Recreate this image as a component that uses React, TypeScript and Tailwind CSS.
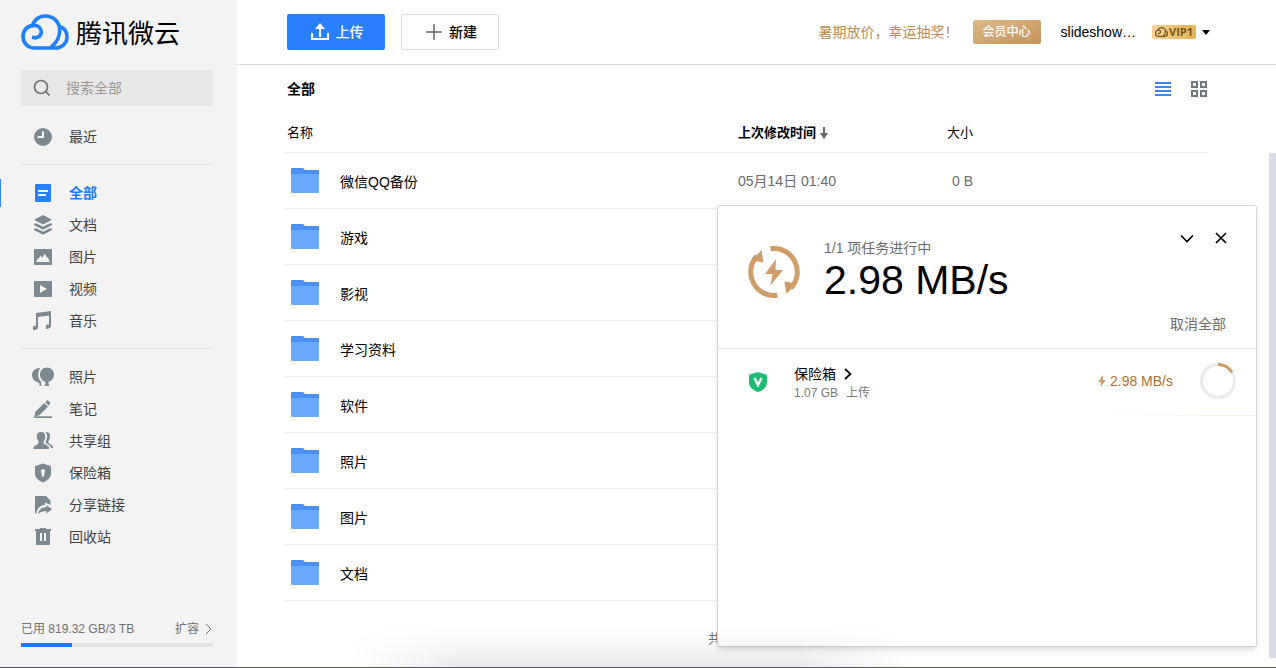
import React from "react";

const FONT = "font-['Liberation_Sans','Noto_Sans_CJK_SC',sans-serif]";

function Cloud({ className, width }: { className: string; width: number }) {
  return (
    <svg viewBox="0 0 48 36" fill="none" stroke="currentColor" strokeWidth={width} strokeLinecap="butt" strokeLinejoin="round" className={className} aria-hidden="true">
      <path d="M11 23.200c4.500 1.800 9.300-.7 9.300-5.300 0-3.900-3.300-6.500-7.300-6.500C6.500 11.400 2 16.300 2 22.500 2 29.200 7 34 13.500 34H34c7 0 12-4.700 12-11 0-5.300-3-9.300-7.500-10.600" />
      <path d="M11.300 12C12.800 6 18 2 24.300 2 32.500 2 38.700 8.300 38.700 16c0 7.500-2.700 12.500-8.700 17.300" />
    </svg>
  );
}

const icons: Record<string, React.ReactNode> = {
  recent: <path fillRule="evenodd" d="M11 2a9 9 0 1 0 0 18 9 9 0 0 0 0-18ZM10 5.500h2V12H5.500v-2H10Z" />,
  all: <path fillRule="evenodd" d="M4 2h14a1 1 0 0 1 1 1v16a1 1 0 0 1-1 1H4a1 1 0 0 1-1-1V3a1 1 0 0 1 1-1Zm2 6v2h10V8Zm0 4v2h8v-2Z" />,
  docs: (
    <>
      <path d="m11 1 9 4.700-9 4.800-9-4.800Z" />
      <path d="m2 9.700 2.200-.4L11 12.800l6.800-3.500 2.200.4v1.300l-9 4.700-9-4.700Zm0 5 2.200-.4L11 17.800l6.800-3.500 2.200.4v1.300l-9 4.700-9-4.700Z" />
    </>
  ),
  images: <path fillRule="evenodd" d="M3 3h16a1 1 0 0 1 1 1v14a1 1 0 0 1-1 1H3a1 1 0 0 1-1-1V4a1 1 0 0 1 1-1Zm1 13h14l-2-4-1.500-1L13 7.500 10 12 8.500 9.500 6.500 12.500 5.500 13Z" />,
  videos: <path fillRule="evenodd" d="M3 3h16a1 1 0 0 1 1 1v14a1 1 0 0 1-1 1H3a1 1 0 0 1-1-1V4a1 1 0 0 1 1-1Zm5 4v8l7-4Z" />,
  music: <path d="M4 3 19 1v14.500c0 2-1.500 3.500-5 3.500v-4c1-.5 2-.7 3-.5V5.500L6 7v10c0 2-1.500 3.200-5 3.200V16.500c1-.6 2-.8 3-.6Z" />,
  photos: (
    <>
      <path d="M8 2C3.500 2 0 5 0 9c0 3.500 2.500 6.500 6.500 7.500l1 1V20H9.200v-4C6.500 13.500 5.500 9 6.500 6 7 4.500 7.600 3 8.500 2Z" />
      <path d="M15 1.500c-4 0-7 3-7 7 0 3.500 2.500 6.700 5.500 7.500v1.200l-.8 2.800h4.600l-.8-2.800V16c3-1 5.500-4 5.500-7.500 0-4-3-7-7-7Z" />
    </>
  ),
  notes: (
    <>
      <path d="M2 18.300h18V20H2Z" />
      <path d="m2.500 18.500.8-4.700 9-8.700 3.700 3.600-8.700 8.600Z" />
      <path d="m13.300 4.200 1.500-1.500c.5-.5 1-.5 1.500 0l1.700 1.700c.5.5.5 1 0 1.500l-1.300 1.500Z" />
    </>
  ),
  group: (
    <>
      <path d="M9 2c3 0 4.300 1.800 4.300 4.500 0 2.300-.8 4-1.800 5 0 1.800.3 2.200 2 3l2.500 1.500c1 .6 1 1.500 1 3H1.500c0-1.500 0-2.400 1-3L5 14.500c1.500-.8 1.700-1.200 1.700-3-1-1-2-2.700-2-5C4.700 3.800 6.300 2 9 2Z" />
      <path d="M13.500 2C17 2 18.500 4 18 7c-.2 2-1 3.500-1.700 4.500 0 1 .3 1.500 1 2l2.500 1.700c1 .8 1.200 1.500 1.200 2.800h-2c-.2-1.200-.5-2-1.700-2.700l-2.500-1.500c-1-.7-1.300-1.300-1-3C15.500 8.500 16 5 13.500 2Z" />
    </>
  ),
  safe: <path fillRule="evenodd" d="m11 1.500 7 2.300c.7.200 1 .6 1 1.200v6.500c0 4-3 7-8 9-5-2-8-5-8-9V5c0-.6.300-1 1-1.200ZM11 7a2.200 2.200 0 0 0-1.200 4v3.500h2.400V11A2.200 2.200 0 0 0 11 7Z" />,
  share: (
    <>
      <path d="M3 2h11l4.500 4.500V11L13 8.500v2.300C8 11.500 4.500 14.500 4.500 19.500H3Z" />
      <path d="M14.300 11 20 15.300 14.300 19.500v-2.600c-3.500 0-6 .9-8.300 3.100.8-4.500 3.800-6.500 8.300-6.700Z" />
    </>
  ),
  trash: <path fillRule="evenodd" d="M8 2h6v1h5v2h-1v13a1 1 0 0 1-1 1H5a1 1 0 0 1-1-1V5H3V3h5Zm0 5v8h2V7Zm4 0v8h2V7Z" />,
};

const groups = [
  [["recent", "最近"]],
  [["all", "全部"], ["docs", "文档"], ["images", "图片"], ["videos", "视频"], ["music", "音乐"]],
  [["photos", "照片"], ["notes", "笔记"], ["group", "共享组"], ["safe", "保险箱"], ["share", "分享链接"], ["trash", "回收站"]],
];

function NavItem({ id, label }: { id: string; label: string }) {
  const active = id === "all";
  return (
    <li>
      <a href={"#" + id} aria-current={active ? "page" : undefined} className={"flex h-8 items-center gap-[15px] pl-8 text-sm " + (active ? "font-bold text-[#1f7aff]" : "text-[#424242]")}>
        <svg viewBox="0 0 22 22" className={"h-[22px] w-[22px] " + (active ? "text-[#2680ff]" : "text-[#7d8991]")} fill="currentColor" aria-hidden="true">
          {icons[id]}
        </svg>
        {label}
      </a>
    </li>
  );
}

function Sidebar() {
  return (
    <aside className="flex w-[237px] shrink-0 flex-col bg-[#f3f3f3]">
      <a href="#home" className="mt-3 flex h-10 items-center gap-[7px] pl-[21px] text-black">
        <Cloud className="h-9 w-12 text-[#2180ff]" width={3.6} />
        <span className="pt-1 text-[26px] leading-9">腾讯微云</span>
      </a>
      <label className="mr-6 mt-[18px] ml-[21px] flex h-9 items-center gap-[15px] rounded-xs bg-[#e7e7e7] pl-3 text-[#707070]">
        <svg viewBox="0 0 18 18" className="h-[18px] w-[18px] shrink-0" fill="none" stroke="currentColor" strokeWidth="1.700" aria-hidden="true">
          <circle cx="8" cy="8" r="6.500" />
          <path d="m12.500 12.500 4 4" />
        </svg>
        <input type="search" aria-label="搜索全部" placeholder="搜索全部" className="w-full min-w-0 bg-transparent text-sm outline-none placeholder:text-[#9a9a9a]" />
      </label>
      <nav className="mt-[15px]">
        {groups.map((group, i) => (
          <ul key={i} className={i === 0 ? "" : "relative mt-[11px] pt-[13px] before:absolute before:top-0 before:right-6 before:left-[21px] before:h-px before:bg-[#e2e2e2]"}>
            {i === 1 && <li aria-hidden="true" className="absolute top-[15px] left-0 h-7 w-px bg-[#3b86ff]" />}
            {group.map(([id, label]) => (
              <NavItem key={id} id={id} label={label} />
            ))}
          </ul>
        ))}
      </nav>
      <div className="mt-auto mr-6 mb-5 ml-[21px] text-xs text-[#707070]">
        <div className="flex items-center justify-between pb-1">
          <span className="leading-5">已用 819.32 GB/3 TB</span>
          <a href="#expand" className="flex items-center gap-1 leading-5">
            扩容
            <svg viewBox="0 0 10 12" className="h-3 w-[10px]" fill="none" stroke="currentColor" aria-hidden="true"><path d="m3 1 5 5-5 5" /></svg>
          </a>
        </div>
        <div className="h-1 bg-[#e2e2e2]">
          <div className="h-full bg-[#1f7aff]" style={{ width: (819.32 / 3072) * 100 + "%" }} />
        </div>
      </div>
    </aside>
  );
}

function Header() {
  return (
    <header className="flex h-[65px] shrink-0 items-center border-b border-[#dcdcdc] pr-[66px] pl-[50px] text-sm">
      <button className="flex h-9 w-[98px] items-center justify-center gap-[7px] rounded-xs bg-[#2a7fff] pl-[2px] font-medium text-white">
        <svg viewBox="0 0 18 18" className="h-[18px] w-[18px]" fill="none" stroke="currentColor" strokeWidth="2" aria-hidden="true">
          <path d="M1 10v6h16v-6M9 14V4" />
          <path d="m9 0 5 6H4Z" fill="currentColor" stroke="none" />
        </svg>
        上传
      </button>
      <button className="ml-4 flex h-9 w-[98px] items-center justify-center gap-[7px] rounded-xs border border-[#dcdcdc] pl-[3px] font-medium text-black">
        <svg viewBox="0 0 16 16" className="h-4 w-4 text-[#60666d]" fill="none" stroke="currentColor" strokeWidth="1.500" aria-hidden="true"><path d="M8 0v16M0 8h16" /></svg>
        新建
      </button>
      <a href="#promo" className="ml-auto text-[#c08a50]">暑期放价，幸运抽奖！</a>
      <button className="ml-[14px] h-6 w-[68px] rounded-xs bg-linear-to-br from-[#dfb98a] to-[#c49359] text-xs font-medium text-white">会员中心</button>
      <button className="ml-5 flex items-center text-black">
        slideshow…
        <span className="ml-4 flex h-[14px] w-11 items-center justify-center gap-px rounded-xs bg-linear-to-r from-[#f4d497] to-[#e2b351] text-[#7d5520]">
          <Cloud className="h-[10px] w-[13px]" width={4.5} />
          <span className="font-['Open_Sans',sans-serif] text-[11px] leading-[14px] font-bold">VIP1</span>
        </span>
        <svg viewBox="0 0 8 5" className="ml-[6px] h-[5px] w-2" fill="currentColor" aria-hidden="true"><path d="M0 0h8L4 5Z" /></svg>
      </button>
    </header>
  );
}

const folders = ["微信QQ备份", "游戏", "影视", "学习资料", "软件", "照片", "图片", "文档"];

function Folder() {
  return (
    <svg viewBox="0 0 28 26" className="h-[26px] w-7 shrink-0" aria-hidden="true">
      <path fill="#4a90f0" d="M0 1a1 1 0 0 1 1-1h11l2 2h13a1 1 0 0 1 1 1v6H0Z" />
      <path fill="#69a8ff" d="M0 6h28v18a1 1 0 0 1-1 1H1a1 1 0 0 1-1-1Z" />
    </svg>
  );
}

function Files() {
  return (
    <main className="relative flex-1">
      <div className="flex h-12 items-center pr-[69px] pl-[50px]">
        <h1 className="text-sm font-bold text-black">全部</h1>
        <button aria-label="列表" className="ml-auto text-[#3b86ff]">
          <svg viewBox="0 0 16 16" className="h-4 w-4" fill="currentColor" aria-hidden="true"><path d="M0 1h16v2H0Zm0 4h16v2H0Zm0 4h16v2H0Zm0 4h16v2H0Z" /></svg>
        </button>
        <button aria-label="网格" className="ml-5 text-[#6e767e]">
          <svg viewBox="0 0 16 16" className="h-4 w-4" fill="none" stroke="currentColor" strokeWidth="2" aria-hidden="true"><path d="M1 1h5v5H1Zm9 0h5v5h-5ZM1 10h5v5H1Zm9 0h5v5h-5Z" /></svg>
        </button>
      </div>
      <div className="pr-[68px] pl-12">
        <table className="w-full table-fixed text-left text-sm text-black">
          <thead>
            <tr className="h-[39px] border-b border-[#ededed] text-[13px]">
              <th scope="col" className="pt-[2px] pl-[2px] font-normal">名称</th>
              <th scope="col" className="w-[209px] pt-[2px] font-bold">
                <button className="flex items-center gap-1">
                  上次修改时间
                  <svg viewBox="0 0 8 12" className="h-3 w-2 text-[#60666d]" fill="currentColor" aria-hidden="true"><path d="M3 0h2v6h3l-4 6-4-6h3Z" /></svg>
                </button>
              </th>
              <th scope="col" className="w-[261px] pt-[2px] font-normal">大小</th>
            </tr>
          </thead>
          <tbody>
            {folders.map((name, i) => (
              <tr key={name} className="h-14 border-b border-[#ededed]">
                <td className="pt-[2px]">
                  <div className="flex items-center gap-[21px] pl-[6px]"><Folder /><span className="pt-[2px]">{name}</span></div>
                </td>
                <td className="pt-[2px] text-[#6b6b6b]">{i === 0 ? "05月14日 01:40" : ""}</td>
                <td className="pt-[2px] pl-[5px] text-[#6b6b6b]">{i === 0 ? "0 B" : ""}</td>
              </tr>
            ))}
          </tbody>
        </table>
        <p className="mt-7 pl-[423px] text-[13px] leading-5 text-[#6b6b6b]">共</p>
      </div>
      <div className="absolute right-0 bottom-[9px] h-[505px] w-[7px] bg-[#d8dde8]" />
      <Transfers />
      <div className="pointer-events-none absolute bottom-0 left-[113px] h-10 w-[560px] bg-linear-to-t from-black/8 to-transparent mask-x-from-80% mask-x-to-100%" />
    </main>
  );
}

function Transfers() {
  return (
    <section aria-label="传输任务" className="absolute right-[19px] bottom-5 flex h-[442px] w-[540px] flex-col rounded-xs border border-[#d3d3da] bg-white shadow-md">
      <div className="flex h-[143px] shrink-0 border-b border-[#dfe2e6] pr-[30px] pl-[30px]">
        <svg viewBox="0 0 52 52" className="mt-10 h-[52px] w-[52px] text-[#cf9d67]" fill="none" aria-hidden="true">
          <path stroke="currentColor" strokeWidth="5" d="M22.500 2.700A23.500 23.500 0 0 1 43 42M29.500 49.300A23.500 23.500 0 0 1 9 10" />
          <path fill="currentColor" d="m13.500 4 2 12.500L3.500 14.500Zm25 44-2-12.500 12 2ZM28 13 17 28h7.500L22.500 39.500 35 24h-7.500Z" />
        </svg>
        <div className="mt-8 ml-6">
          <p className="text-sm leading-5 text-[#6b6b6b]">1/1 项任务进行中</p>
          <p className="text-[41px] leading-[44px] text-black">2.98 MB/s</p>
        </div>
        <div className="ml-auto flex flex-col items-end">
          <div className="mt-6 flex items-center gap-[18px] text-black">
            <button aria-label="最小化"><svg viewBox="0 0 16 16" className="h-4 w-4" fill="none" stroke="currentColor" strokeWidth="1.700" aria-hidden="true"><path d="m2 5.500 6 6 6-6" /></svg></button>
            <button aria-label="关闭" className="mr-[-3px]"><svg viewBox="0 0 16 16" className="h-4 w-4" fill="none" stroke="currentColor" strokeWidth="1.700" aria-hidden="true"><path d="m3 3 10 10M13 3 3 13" /></svg></button>
          </div>
          <button className="mt-auto mb-[14px] text-sm leading-5 text-[#6b6b6b]">取消全部</button>
        </div>
      </div>
      <div className="flex h-[66px] shrink-0 items-center pr-5 pl-[30px]">
        <svg viewBox="0 0 20 20" className="h-5 w-5" aria-hidden="true">
          <path fill="#1cbb70" d="m10 0 8 2.500c.7.200 1 .6 1 1.300V10c0 5-3.500 8-9 10C4.500 18 1 15 1 10V3.800c0-.7.300-1.100 1-1.300Z" />
          <path fill="none" stroke="#fff" strokeWidth="2.500" d="m6.500 6 3.500 7 3.500-7" />
        </svg>
        <div className="ml-[26px] pt-[2px]">
          <a href="#safe" className="flex items-center gap-2 text-sm leading-5 text-black">
            保险箱
            <svg viewBox="0 0 8 12" className="h-3 w-2" fill="none" stroke="currentColor" strokeWidth="1.700" aria-hidden="true"><path d="m1 1 5.500 5L1 11" /></svg>
          </a>
          <p className="flex gap-2 text-xs leading-[18px] text-[#777]"><span>1.07 GB</span><span>上传</span></p>
        </div>
        <div className="ml-auto flex items-center pb-[2px]">
          <svg viewBox="0 0 8 12" className="h-3 w-2 text-[#cf9d67]" fill="currentColor" aria-hidden="true"><path d="M5 0 0 7h3L2.500 12 8 5H5Z" /></svg>
          <span className="ml-1 text-sm text-[#b0702a]">2.98 MB/s</span>
          <svg viewBox="0 0 36 36" className="ml-[27px] h-9 w-9" fill="none" strokeWidth="3" role="img" aria-label="上传进度">
            <circle cx="18" cy="18" r="16.500" stroke="#e6ecf1" />
            <path stroke="#cf9d67" d="M18 1.500A16.500 16.500 0 0 1 32 9.500" />
          </svg>
        </div>
      </div>
      <div className="h-px w-full bg-linear-to-r from-transparent from-70% to-[#fbf0e6]" />
    </section>
  );
}

export default function App() {
  return (
    <div className={"flex min-h-screen border-b border-[#55594b] bg-white " + FONT}>
      <Sidebar />
      <div className="flex min-w-0 flex-1 flex-col">
        <Header />
        <Files />
      </div>
    </div>
  );
}
